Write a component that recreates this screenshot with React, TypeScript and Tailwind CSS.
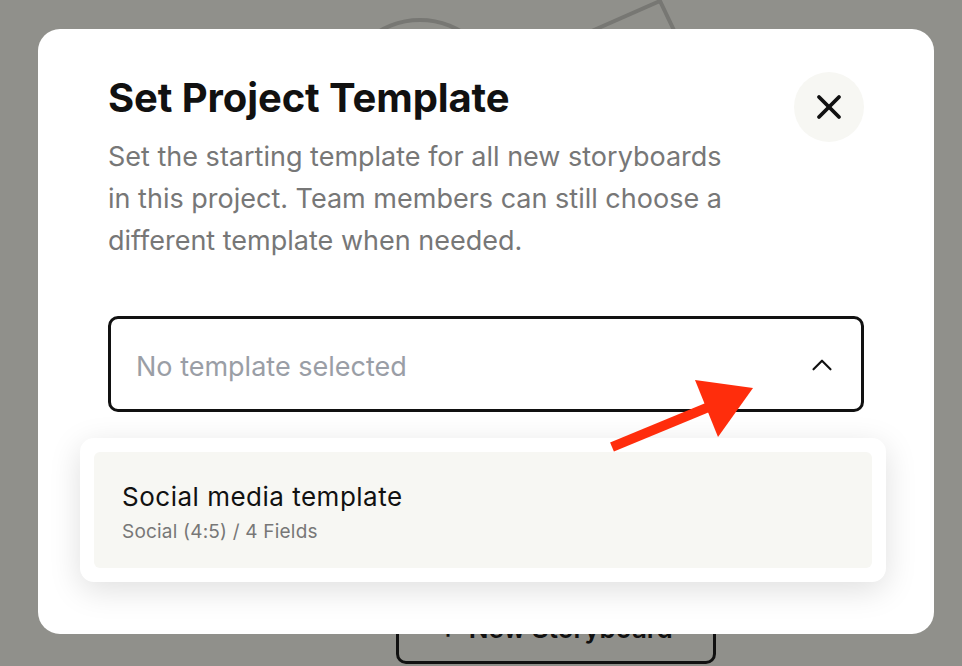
import { ChevronUp, X } from "lucide-react";

const font = { fontFamily: "Inter, 'Noto Sans', sans-serif" };

export default function App() {
  return (
    <div
      className="relative w-[962px] h-[666px] overflow-hidden bg-[#90908b] flex flex-col items-center"
      style={font}
    >
      {/* page behind the overlay */}
      <svg width="962" height="120" viewBox="0 0 962 120" className="shrink-0">
        <circle cx="420" cy="100" r="80" fill="none" stroke="#777773" strokeWidth="4" />
        <path d="M560 45 L660 1 L700 85" fill="none" stroke="#777773" strokeWidth="4" />
      </svg>
      <div className="mt-auto mb-[2px] ml-[150px] w-[320px] h-[72px] border-[3px] border-[#111] rounded-[10px] flex items-center justify-center gap-3 text-[26px] font-semibold text-[#111]">
        <span>+</span>
        <span>New Storyboard</span>
      </div>

      {/* modal */}
      <div className="absolute left-[38px] top-[29px] w-[896px] h-[605px] rounded-[22px] bg-white px-[70px] pt-[43px]">
        <div className="flex justify-between items-start">
          <div>
            <h1 className="mt-[2px] text-[40px] leading-[48px] font-bold text-[#111] tracking-[-0.1px]">
              Set Project Template
            </h1>
            <p className="mt-[14px] w-[640px] text-[27px] leading-[42px] text-[#777]">
              Set the starting template for all new storyboards in this project. Team members can still choose a
              different template when needed.
            </p>
          </div>
          <button className="w-[70px] h-[70px] rounded-full bg-[#f7f7f3] flex items-center justify-center text-[#111]">
            <X size={40} strokeWidth={2.3} />
          </button>
        </div>

        <div className="mt-[54px] h-[96px] border-[3px] border-[#111] rounded-[10px] flex items-center justify-between pl-[25px] pr-[22px]">
          <span className="mt-[6px] text-[27px] text-[#9a9ea6]">No template selected</span>
          <ChevronUp size={34} strokeWidth={1.5} className="mt-[2px] text-[#111]" />
        </div>

        {/* open dropdown */}
        <div className="absolute left-[42px] top-[409px] w-[806px] h-[144px] rounded-[14px] bg-white p-[14px] shadow-[0_8px_32px_rgba(0,0,0,0.13)]">
          <div className="h-full rounded-[6px] bg-[#f7f7f3] pl-[28px] pt-[5px] flex flex-col justify-center">
            <div className="text-[26px] leading-[32px] tracking-[0.5px] text-[#111]">Social media template</div>
            <div className="mt-[7px] text-[19px] leading-[24px] tracking-[0.2px] text-[#777]">Social (4:5) / 4 Fields</div>
          </div>
        </div>
      </div>

      {/* annotation arrow */}
      <svg className="absolute inset-0 pointer-events-none" width="962" height="666" viewBox="0 0 962 666">
        <line x1="612" y1="447" x2="716" y2="404" stroke="#ff2d0c" strokeWidth="10" />
        <polygon points="695,380 753,388 718,437" fill="#ff2d0c" />
      </svg>
    </div>
  );
}
